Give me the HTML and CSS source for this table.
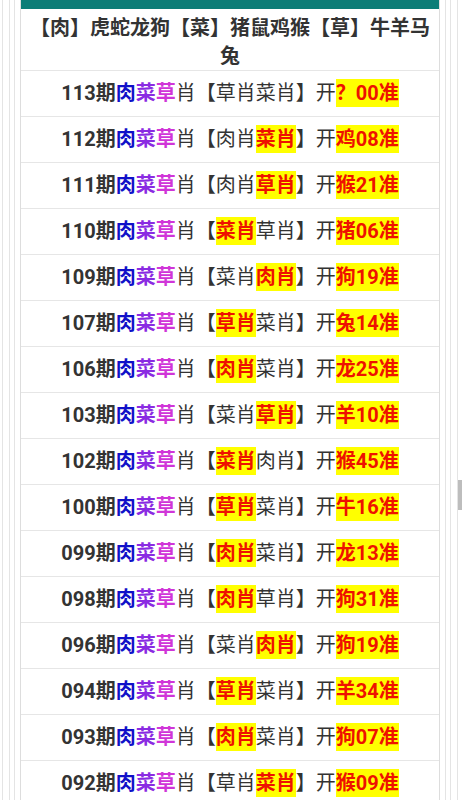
FILE: index.html
```html
<!DOCTYPE html>
<html lang="zh-CN">
<head>
  <meta charset="UTF-8">
  <meta name="viewport" content="width=device-width, initial-scale=1.0">
  <title>肉菜草肖</title>
  <link rel="stylesheet" href="styles.css">
</head>
<body>
  <!-- 外层边框 -->
  <div class="frame frame-a">
    <div class="frame frame-b">
      <div class="frame frame-c">
        <div class="box">
          <div class="box-top"></div>
          <table class="list">
            <tr><td class="head">【肉】虎蛇龙狗【菜】猪鼠鸡猴【草】牛羊马兔</td></tr>
            <tr><td><b>113期</b><b class="c1">肉</b><b class="c2">菜</b><b class="c3">草</b>肖【草肖菜肖】开<b class="hit">？00准</b></td></tr>
            <tr><td><b>112期</b><b class="c1">肉</b><b class="c2">菜</b><b class="c3">草</b>肖【肉肖<span class="mark">菜肖</span>】开<b class="hit">鸡08准</b></td></tr>
            <tr><td><b>111期</b><b class="c1">肉</b><b class="c2">菜</b><b class="c3">草</b>肖【肉肖<span class="mark">草肖</span>】开<b class="hit">猴21准</b></td></tr>
            <tr><td><b>110期</b><b class="c1">肉</b><b class="c2">菜</b><b class="c3">草</b>肖【<span class="mark">菜肖</span>草肖】开<b class="hit">猪06准</b></td></tr>
            <tr><td><b>109期</b><b class="c1">肉</b><b class="c2">菜</b><b class="c3">草</b>肖【菜肖<span class="mark">肉肖</span>】开<b class="hit">狗19准</b></td></tr>
            <tr><td><b>107期</b><b class="c1">肉</b><b class="c2">菜</b><b class="c3">草</b>肖【<span class="mark">草肖</span>菜肖】开<b class="hit">兔14准</b></td></tr>
            <tr><td><b>106期</b><b class="c1">肉</b><b class="c2">菜</b><b class="c3">草</b>肖【<span class="mark">肉肖</span>菜肖】开<b class="hit">龙25准</b></td></tr>
            <tr><td><b>103期</b><b class="c1">肉</b><b class="c2">菜</b><b class="c3">草</b>肖【菜肖<span class="mark">草肖</span>】开<b class="hit">羊10准</b></td></tr>
            <tr><td><b>102期</b><b class="c1">肉</b><b class="c2">菜</b><b class="c3">草</b>肖【<span class="mark">菜肖</span>肉肖】开<b class="hit">猴45准</b></td></tr>
            <tr><td><b>100期</b><b class="c1">肉</b><b class="c2">菜</b><b class="c3">草</b>肖【<span class="mark">草肖</span>菜肖】开<b class="hit">牛16准</b></td></tr>
            <tr><td><b>099期</b><b class="c1">肉</b><b class="c2">菜</b><b class="c3">草</b>肖【<span class="mark">肉肖</span>菜肖】开<b class="hit">龙13准</b></td></tr>
            <tr><td><b>098期</b><b class="c1">肉</b><b class="c2">菜</b><b class="c3">草</b>肖【<span class="mark">肉肖</span>草肖】开<b class="hit">狗31准</b></td></tr>
            <tr><td><b>096期</b><b class="c1">肉</b><b class="c2">菜</b><b class="c3">草</b>肖【菜肖<span class="mark">肉肖</span>】开<b class="hit">狗19准</b></td></tr>
            <tr><td><b>094期</b><b class="c1">肉</b><b class="c2">菜</b><b class="c3">草</b>肖【<span class="mark">草肖</span>菜肖】开<b class="hit">羊34准</b></td></tr>
            <tr><td><b>093期</b><b class="c1">肉</b><b class="c2">菜</b><b class="c3">草</b>肖【<span class="mark">肉肖</span>菜肖】开<b class="hit">狗07准</b></td></tr>
            <tr><td><b>092期</b><b class="c1">肉</b><b class="c2">菜</b><b class="c3">草</b>肖【草肖<span class="mark">菜肖</span>】开<b class="hit">猴09准</b></td></tr>
          </table>
        </div>
      </div>
    </div>
  </div>

  <!-- 滚动条 -->
  <div class="scroll-thumb"></div>
</body>
</html>
```

FILE: styles.css
```css
/* 页面基础 */
body {
  margin: 0;
  font-family: Roboto, "Noto Sans CJK SC", sans-serif;
  color: #333;
  background: #fff;
  overflow: hidden;
}

/* 多层边框 */
.frame {
  border-left: 1px solid #e4e4e4;
  border-right: 1px solid #e4e4e4;
}
.frame-a {
  margin-left: 2px;
  width: 442px;
  padding: 0 6px;
}
.frame-b {
  padding: 0 4px;
}
.frame-c {
  padding: 0 5px;
}

.box {
  border-left: 1px solid #ddd;
  border-right: 1px solid #ddd;
}
.box-top {
  height: 9px;
  background: #0c7d77;
}

/* 列表 */
.list {
  width: 100%;
  border-collapse: collapse;
}
.list td {
  border-bottom: 1px solid #e6e6e6;
  text-align: center;
  font-size: 20px;
  line-height: 29px;
  padding: 8px 0;
  white-space: nowrap;
}
.list td.head {
  white-space: normal;
  font-weight: bold;
  line-height: 28px;
  padding: 5px 2px 0;
}

.list b {
  font-weight: bold;
}
.c1 { color: #1010c8; }
.c2 { color: #8a2be2; }
.c3 { color: #d035d8; }

/* 高亮 */
.mark, .hit {
  background: #ffff00;
  color: #ee1100;
  font-weight: bold;
  padding: 2px 0;
}

.scroll-thumb {
  position: fixed;
  right: 0;
  top: 480px;
  width: 4px;
  height: 30px;
  background: #bdbdbd;
}
```
